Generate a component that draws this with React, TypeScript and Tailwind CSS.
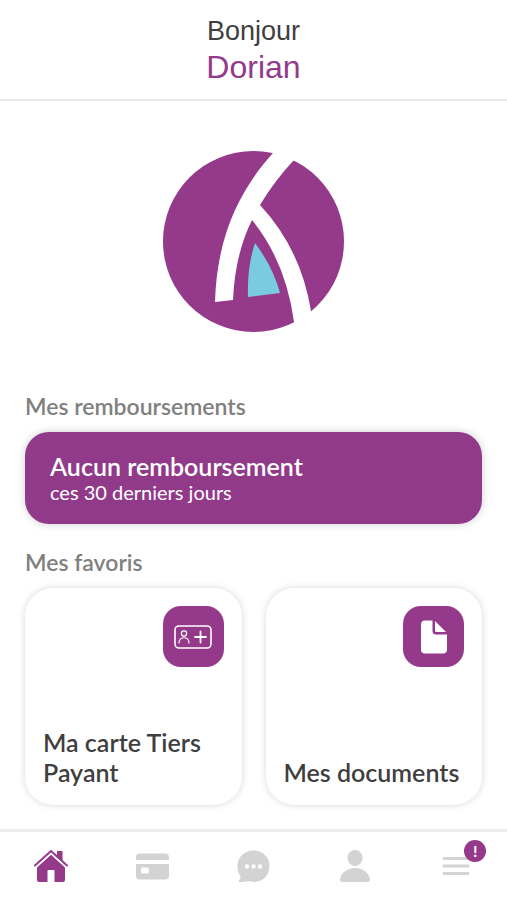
const favorites = [
  { id: 1, title: "Ma carte Tiers Payant", icon: CardPlusIcon, href: "#carte" },
  { id: 2, title: "Mes documents", icon: DocumentIcon, href: "#documents" },
];

const tabs = [
  { id: "home", label: "Accueil", icon: HomeIcon, active: true, alert: false },
  { id: "card", label: "Carte", icon: CardIcon, active: false, alert: false },
  { id: "chat", label: "Messages", icon: ChatIcon, active: false, alert: false },
  { id: "profile", label: "Profil", icon: ProfileIcon, active: false, alert: false },
  { id: "menu", label: "Menu", icon: MenuIcon, active: false, alert: true },
];

function Logo() {
  return (
    <svg width="181" height="181" viewBox="0 0 181 181" aria-hidden="true">
      <circle cx="90.5" cy="90.5" r="90.5" fill="#95398b" />
      <path
        d="M117 -6 L110 2 C82 33 54 78 52 151 L70 149 Q72 103 89 69 Q123 111 131 171 L133 182 L152 172 L148 160 Q138 98 97 54 Q112 29 131 9 L139 -1 Z"
        fill="#fff"
      />
      <path d="M92 92 Q110 116 117 142 L85 146 Q84 116 92 92 Z" fill="#7bcbe0" />
    </svg>
  );
}

function CardPlusIcon() {
  return (
    <svg width="38" height="24" viewBox="0 0 38 24" fill="none" stroke="#fff" strokeLinecap="round" aria-hidden="true">
      <rect x="1" y="1" width="36" height="22" rx="4" strokeWidth="1.6" />
      <circle cx="10" cy="8.5" r="2.6" strokeWidth="1.2" />
      <path d="M5 18C5 11 15 11 15 18" strokeWidth="1.2" />
      <path d="M26.5 6.5V17.5M21 12H32" strokeWidth="1.8" />
    </svg>
  );
}

function DocumentIcon() {
  return (
    <svg width="26" height="34" viewBox="0 0 26 34" fill="#fff" aria-hidden="true">
      <path d="M4 0.5H11.5V11Q11.5 14.5 15 14.5H26V29.5Q26 33.5 22 33.5H4Q0 33.5 0 29.5V4.5Q0 0.5 4 0.5Z" />
      <path d="M14 1L25 12H15.5Q14 12 14 10.5Z" />
    </svg>
  );
}

function HomeIcon() {
  return (
    <svg width="34" height="32" viewBox="0 0 34 32" fill="currentColor" aria-hidden="true">
      <path d="M17 4.5L31 17V30Q31 32 29 32H20.5V21Q20.5 20 19.5 20H14.5Q13.5 20 13.5 21V32H5Q3 32 3 30V17Z" />
      <path d="M1 16.5L17 2L33 16.5" fill="none" stroke="#fff" strokeWidth="4" />
      <path d="M23 1H28.5V12L23 7Z" />
      <path d="M1 15.5L17 1L33 15.5" fill="none" stroke="currentColor" strokeWidth="2" strokeLinecap="round" strokeLinejoin="round" />
    </svg>
  );
}

function CardIcon() {
  return (
    <svg width="33" height="27" viewBox="0 0 33 27" fill="currentColor" aria-hidden="true">
      <path d="M4 0.5H29Q33 0.5 33 4.5V7H0V4.5Q0 0.5 4 0.5Z" />
      <path
        fillRule="evenodd"
        d="M0 11H33V22.5Q33 26.5 29 26.5H4Q0 26.5 0 22.5ZM6.5 14.5Q5 14.5 5 16V19Q5 20.5 6.5 20.5H11.5Q13 20.5 13 19V16Q13 14.5 11.5 14.5Z"
      />
    </svg>
  );
}

function ChatIcon() {
  return (
    <svg width="33" height="33" viewBox="0 0 33 33" aria-hidden="true">
      <path
        d="M16.5 0.5C26 0.5 32.5 7.5 32.5 16C32.5 25 26 32 16.5 32C14 32 12 31 9.5 31.5C7 32 4.5 32 2.500 32C1.5 32 1.5 31 2 30.5C3.500 28.5 4 27.5 3 25.5C1 22.5 0.5 19.5 0.5 16C0.5 7.5 7 0.5 16.5 0.5Z"
        fill="currentColor"
      />
      <g fill="#fff">
        <circle cx="10" cy="16.5" r="2.2" />
        <circle cx="16.5" cy="16.5" r="2.2" />
        <circle cx="23" cy="16.5" r="2.2" />
      </g>
    </svg>
  );
}

function ProfileIcon() {
  return (
    <svg width="30" height="32" viewBox="0 0 30 32" fill="currentColor" aria-hidden="true">
      <ellipse cx="15" cy="8" rx="7.5" ry="8" />
      <path d="M0 29.5C2 14 28 14 30 29.5Q30 32 28 32H2Q0 32 0 29.5Z" />
    </svg>
  );
}

function MenuIcon() {
  return (
    <svg width="28" height="20" viewBox="0 0 28 20" stroke="currentColor" strokeWidth="3" strokeLinecap="round" aria-hidden="true">
      <path d="M2 2.5H26M2 10H26M2 17.5H26" />
    </svg>
  );
}

export default function App() {
  return (
    <div className="min-h-screen flex flex-col bg-white text-[#3f3f3f] font-[Lato,sans-serif]">
      {/* Greeting */}
      <header className="border-b-2 border-[#ececec] pt-[13px] pb-[14px] text-center font-['Liberation_Sans',sans-serif]">
        <h1>
          <span className="block text-[27px] leading-9">Bonjour</span>
          <span className="block text-[32px] leading-9 text-[#95398b]">Dorian</span>
        </h1>
      </header>

      <main className="flex-1 px-[25px] pb-6">
        <div className="flex justify-center pt-[50px] pb-14">
          <Logo />
        </div>

        {/* Refunds */}
        <section>
          <h2 className="text-[23px] leading-9 font-semibold text-[#808080]">Mes remboursements</h2>
          <a
            href="#remboursements"
            className="block mt-2 px-[25px] py-5 rounded-3xl bg-[#923a8a] text-white shadow-[0_0_8px_rgba(0,0,0,0.2)]"
          >
            <p className="text-[25px] leading-7 font-semibold">Aucun remboursement</p>
            <p className="text-xl leading-6">ces 30 derniers jours</p>
          </a>
        </section>

        {/* Favorites */}
        <section className="mt-5">
          <h2 className="text-[23px] leading-9 font-semibold text-[#808080]">Mes favoris</h2>
          <div className="grid grid-cols-2 gap-6 mt-2">
            {favorites.map((item) => {
              const Icon = item.icon;
              return (
                <a
                  key={item.id}
                  href={item.href}
                  className="aspect-square flex flex-col justify-between rounded-[28px] p-[18px] bg-white shadow-[0_0_7px_rgba(0,0,0,0.16)]"
                >
                  <span className="self-end w-[61px] h-[61px] rounded-[18px] bg-[#95398b] flex items-center justify-center">
                    <Icon />
                  </span>
                  <span className="text-[25px] leading-[30px] font-semibold">{item.title}</span>
                </a>
              );
            })}
          </div>
        </section>
      </main>

      {/* Tab bar */}
      <nav className="border-t-[3px] border-[#ececec] grid grid-cols-5 h-[71px]">
        {tabs.map((tab) => {
          const Icon = tab.icon;
          return (
            <button
              key={tab.id}
              type="button"
              aria-label={tab.label}
              className={`flex items-center justify-center ${tab.active ? "text-[#95398b]" : "text-[#d3d3d3]"}`}
            >
              <span className="relative">
                <Icon />
                {tab.alert && (
                  <span className="absolute -top-4 -right-4 w-[22px] h-[22px] rounded-full bg-[#95398b] text-white text-base leading-[22px] font-bold text-center">
                    !
                  </span>
                )}
              </span>
            </button>
          );
        })}
      </nav>
    </div>
  );
}
